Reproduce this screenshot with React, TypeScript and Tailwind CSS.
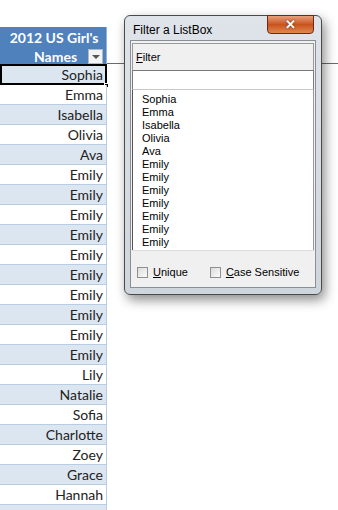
const names = [
  'Sophia', 'Emma', 'Isabella', 'Olivia', 'Ava', 'Emily', 'Emily', 'Emily', 'Emily', 'Emily', 'Emily', 'Emily',
  'Emily', 'Emily', 'Emily', 'Lily', 'Natalie', 'Sofia', 'Charlotte', 'Zoey', 'Grace', 'Hannah', '',
]

const listItems = ['Sophia', 'Emma', 'Isabella', 'Olivia', 'Ava', 'Emily', 'Emily', 'Emily', 'Emily', 'Emily', 'Emily', 'Emily']

function Checkbox({ label, accel }: { label: string; accel: string }) {
  return (
    <div className="flex items-center gap-[5px] whitespace-nowrap">
      <div className="w-[11px] h-[11px] border border-[#8f8f8f] bg-gradient-to-br from-[#dcdcdc] to-[#fbfbfb]" />
      <span>
        <span className="underline underline-offset-1">{accel}</span>
        {label.slice(1)}
      </span>
    </div>
  )
}

export default function App() {
  return (
    <div className="relative w-[338px] h-[510px] overflow-hidden bg-white font-['Lato','Liberation_Sans',sans-serif]">
      <div className="flex">
        {/* Sheet column */}
        <div className="w-[107px] shrink-0">
          <div className="h-[27px]" />
          <div className="h-[38px] bg-[#4f81bd] border-r border-[#95b3d7] text-white font-bold text-[14px] leading-[19px] pt-[1px]">
            <div className="text-center pl-[2px]">2012 US Girl's</div>
            <div className="flex items-center">
              <span className="ml-[34px]">Names</span>
              <div className="ml-auto mr-[3px] w-[15px] h-[15px] bg-[#f4f4f4] border border-[#b0b8c4] flex items-center justify-center">
                <div className="w-0 h-0 border-l-[4px] border-r-[4px] border-t-[4px] border-l-transparent border-r-transparent border-t-[#555]" />
              </div>
            </div>
          </div>
          {names.map((n, i) => (
            <div
              key={i}
              className={`relative h-[20px] border-b border-r border-[#b8cce4] text-right pr-[3px] text-[14px] leading-[19px] text-[#222] ${
                i % 2 === 0 ? 'bg-[#dce6f1]' : 'bg-white'
              }`}
            >
              {n}
              {i === 0 && (
                <>
                  <div className="absolute left-0 -top-[1px] right-[-1px] bottom-[-1px] border-2 border-black" />
                  <div className="absolute right-[-3px] bottom-[-4px] w-[5px] h-[5px] bg-black border border-white" />
                </>
              )}
            </div>
          ))}
        </div>
        {/* Rest of sheet */}
        <div className="flex-1 h-[64px] border-b border-[#6b6b6b]" />
      </div>

      {/* Dialog */}
      <div className="absolute left-[124px] top-[15px] w-[198px] h-[280px] rounded-[6px] border border-[#4a4a4a] bg-gradient-to-b from-[#dfe4ea] to-[#cfd5dc] shadow-[3px_5px_12px_rgba(0,0,0,0.45)] font-['Liberation_Sans',sans-serif] flex flex-col">
        <div className="h-[24px] flex items-start shrink-0">
          <span className="ml-[8px] mt-[5px] text-[12px] text-black">Filter a ListBox</span>
          <div className="ml-auto mr-[7px] -mt-[1px] w-[47px] h-[19px] rounded-b-[4px] border border-[#6b2a12] bg-gradient-to-b from-[#e8a07a] via-[#c9531d] to-[#e0874f] flex items-center justify-center">
            <span className="text-white font-bold text-[13px] leading-none [text-shadow:0_0_2px_#5a1f05]">✕</span>
          </div>
        </div>
        <div className="mx-[5px] flex-1 mb-[6px] border border-[#8a8f96] bg-[#f0f0f0] flex flex-col text-[11px] text-black">
          <div className="mx-[1px] mt-[2px] border border-[#9a9a9a] border-b-0 bg-[#f0f0f0] h-[27px] pl-[3px] pt-[5px] shrink-0">
            <span className="underline underline-offset-1">F</span>ilter
          </div>
          <div className="mx-[1px] h-[20px] border border-[#7a7a7a] border-b-[#c8c8c8] bg-white shrink-0" />
          <div className="mx-[1px] h-[160px] border-l border-r border-[#9a9a9a] border-l-[#555] bg-white pl-[9px] pt-[3px] leading-[13px] overflow-hidden shrink-0">
            {listItems.map((t, i) => (
              <div key={i}>{t}</div>
            ))}
          </div>
          <div className="mx-[1px] border-t border-[#dcdcdc] flex items-center gap-[22px] pl-[5px] pt-[13px]">
            <Checkbox label="Unique" accel="U" />
            <Checkbox label="Case Sensitive" accel="C" />
          </div>
        </div>
      </div>
    </div>
  )
}
